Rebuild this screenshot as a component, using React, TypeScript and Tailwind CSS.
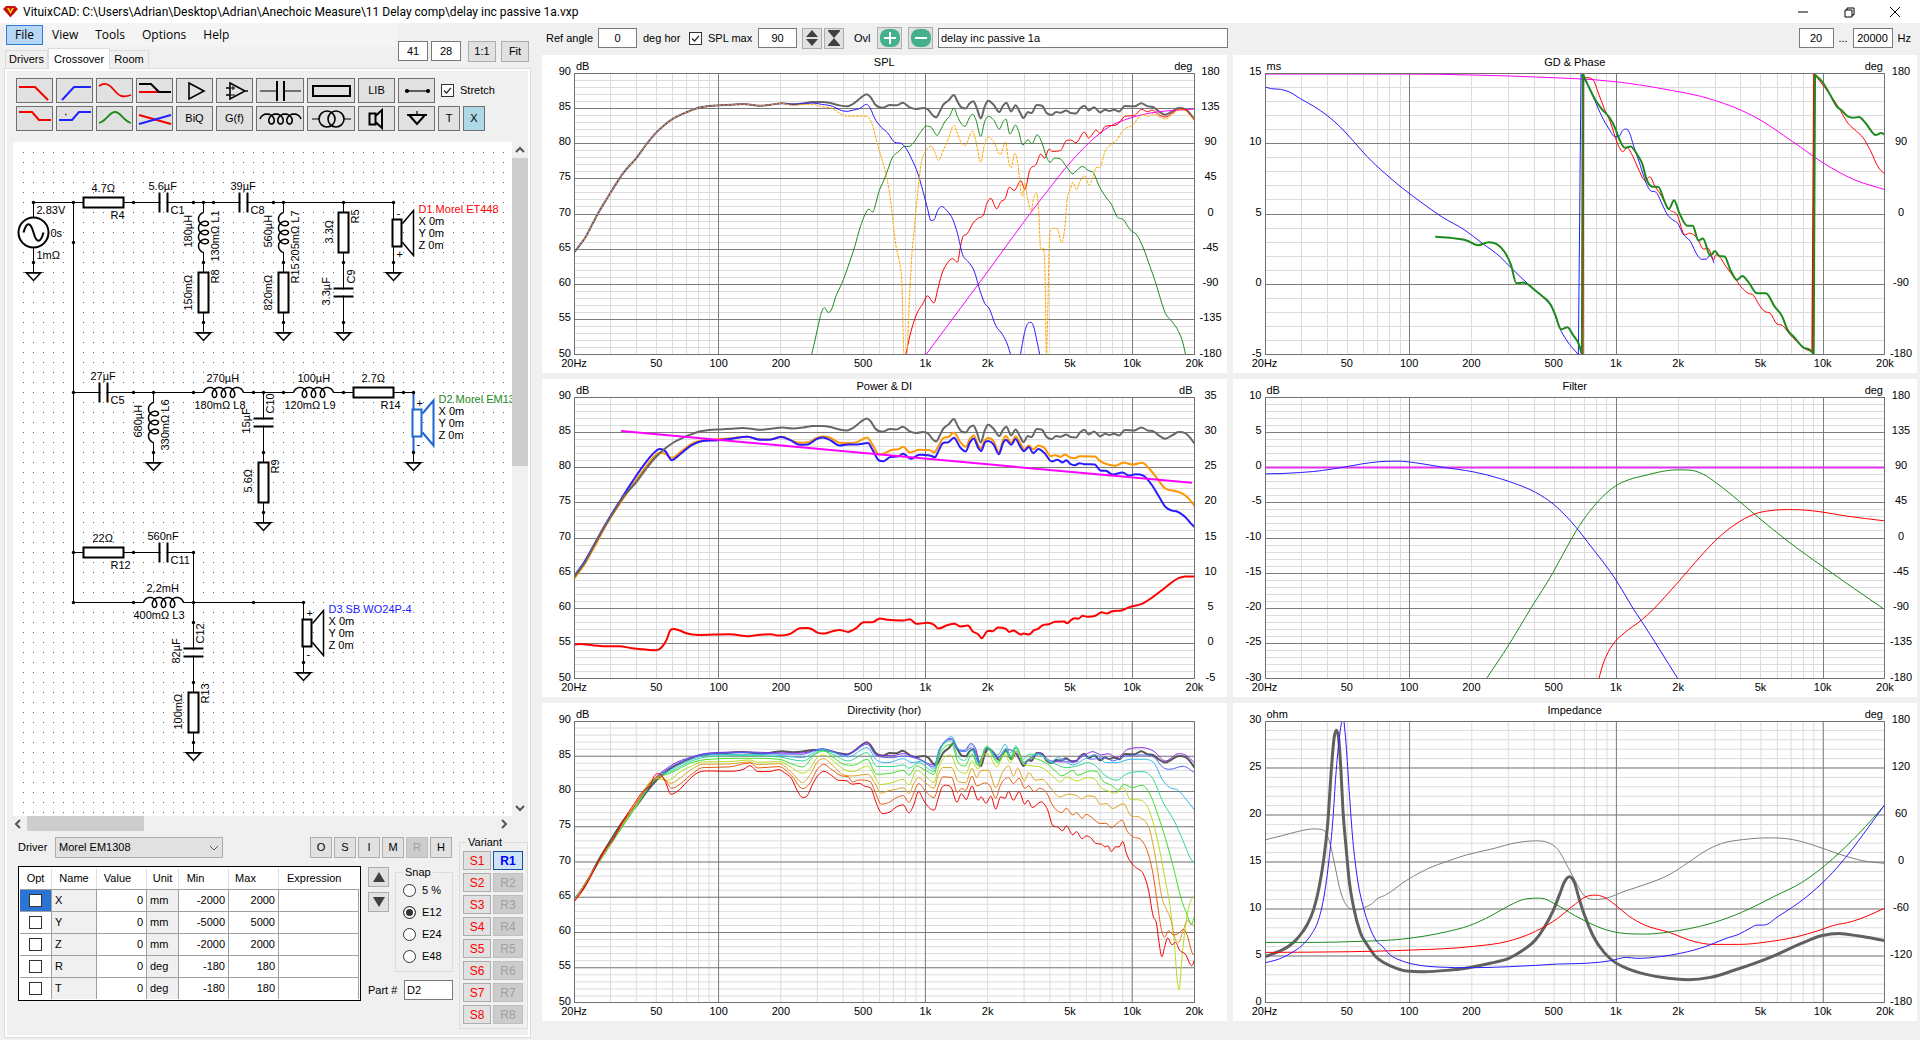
import React from "react";

/* ---------- small form parts ---------- */

function TextBox({ label, value, className = "" }: { label: string; value: string; className?: string }) {
  return (
    <input
      type="text"
      aria-label={label}
      defaultValue={value}
      className={"h-5 border border-[#7a7a7a] bg-white outline-none " + className}
    />
  );
}

function Check({ id, checked = false }: { id: string; checked?: boolean }) {
  return (
    <span className="relative block size-[13px]">
      <input
        id={id}
        type="checkbox"
        aria-label={id}
        defaultChecked={checked}
        className="peer block size-[13px] appearance-none border border-[#333] bg-white"
      />
      <svg viewBox="0 0 13 13" className="pointer-events-none absolute inset-0 hidden size-[13px] peer-checked:block">
        <path d="M3 6.5 L5.5 9 L10 3.8" fill="none" stroke="#222" strokeWidth="1.2" />
      </svg>
    </span>
  );
}

/* ---------- tool bar ---------- */

const NARROW = "0 0 35 23";
const WIDE = "0 0 46 23";

function coilPath(length: number) {
  const d = 9;
  const b = (length - d * 3.5) / 2;
  const steps = 112;
  let p = "";
  for (let i = 0; i <= steps; i++) {
    const a = -Math.PI / 2 + (7 * Math.PI * i) / steps;
    const x = (d * a) / (2 * Math.PI) + b * Math.sin(a) + d / 4 + b;
    const y = -5 * Math.cos(a);
    p += (i ? "L" : "M") + x.toFixed(2) + "," + y.toFixed(2);
  }
  return p;
}

function ToolButton({ label, children, size = "w-[37px]" }: { label: string; children: React.ReactNode; size?: string }) {
  return (
    <button
      type="button"
      aria-label={label}
      className={"flex h-[25px] items-center justify-center border border-[#707070] bg-[#e1e1e1] " + size}
    >
      {children}
    </button>
  );
}

function Glyph({ wide = false, children }: { wide?: boolean; children: React.ReactNode }) {
  return (
    <svg viewBox={wide ? WIDE : NARROW} className={wide ? "h-[23px] w-[46px]" : "h-[23px] w-[35px]"} fill="none" stroke="#000" strokeWidth="1.6">
      {children}
    </svg>
  );
}

function Toolbar() {
  return (
    <div className="flex flex-col gap-[3px] pl-[9px] pt-[7px]">
      <div className="flex items-center gap-[3px]">
        <ToolButton label="Low pass"><Glyph><path d="M2 8H18L31 21" stroke="#f00000" strokeWidth="2" /></Glyph></ToolButton>
        <ToolButton label="High pass"><Glyph><path d="M5 21L17 8H34" stroke="#2222ff" strokeWidth="2" /></Glyph></ToolButton>
        <ToolButton label="All pass"><Glyph><path d="M2 7C8 3 12 5 17 11S25 19 34 16" stroke="#f00000" strokeWidth="1.8" /></Glyph></ToolButton>
        <ToolButton label="Notch"><Glyph><path d="M2 13H21" stroke="#f00000" strokeWidth="2" /><path d="M2 5H14L22 13H34" strokeWidth="2" /></Glyph></ToolButton>
        <ToolButton label="Buffer"><Glyph><path d="M12 4L27 12L12 20Z" /></Glyph></ToolButton>
        <ToolButton label="Operational amplifier"><Glyph><path d="M13 4L28 12L13 20ZM9 9H13M9 16H13M28 12H31" /><path d="M14 9H18M16 7V11M14 16H18" strokeWidth="1" /></Glyph></ToolButton>
        <ToolButton label="Capacitor" size="w-12"><Glyph wide><path d="M3 12H19M28 12H44" strokeWidth="1.2" /><path d="M20 2V22M27 2V22" strokeWidth="2" /></Glyph></ToolButton>
        <ToolButton label="Resistor" size="w-12"><Glyph wide><rect x="5" y="7" width="37" height="10" strokeWidth="2" /></Glyph></ToolButton>
        <ToolButton label="Library">LIB</ToolButton>
        <ToolButton label="Wire"><Glyph><path d="M8 12H29" strokeWidth="1.2" /><circle cx="8" cy="12" r="1.3" fill="#000" /><circle cx="29" cy="12" r="1.3" fill="#000" /></Glyph></ToolButton>
        <span className="ml-[3px]"><Check id="stretch" checked /></span>
        <label htmlFor="stretch" className="ml-[3px]">Stretch</label>
      </div>
      <div className="flex items-center gap-[3px]">
        <ToolButton label="Low shelf"><Glyph><path d="M2 5H15L22 13H34" stroke="#f00000" strokeWidth="2" /></Glyph></ToolButton>
        <ToolButton label="High shelf"><Glyph><path d="M2 13H15L22 5H34" stroke="#2222ff" strokeWidth="2" /><path d="M8 7.5H9.5" stroke="#333" strokeWidth="1.5" /></Glyph></ToolButton>
        <ToolButton label="Peak"><Glyph><path d="M2 16C10 14 12 5 18 5S26 14 34 16" stroke="#1d8a1d" strokeWidth="1.8" /></Glyph></ToolButton>
        <ToolButton label="Crossing"><Glyph><path d="M2 8L34 17" stroke="#f00000" strokeWidth="2" /><path d="M2 17L34 8" stroke="#2222ff" strokeWidth="2" /></Glyph></ToolButton>
        <ToolButton label="Biquad">BiQ</ToolButton>
        <ToolButton label="Transfer function">G(f)</ToolButton>
        <ToolButton label="Inductor" size="w-12"><Glyph wide><path d={coilPath(41)} transform="translate(3 12)" /></Glyph></ToolButton>
        <ToolButton label="Transformer" size="w-12"><Glyph wide><circle cx="19" cy="12" r="8" /><circle cx="28" cy="12" r="8" /><path d="M4 12H11M36 12H43" strokeWidth="1.2" /></Glyph></ToolButton>
        <ToolButton label="Driver"><Glyph><path d="M10.5 6.5H16.5V17.5H10.5ZM16.5 9L23 3V21L16.5 15" strokeWidth="2" /></Glyph></ToolButton>
        <ToolButton label="Ground"><Glyph><path d="M18 4V8" strokeWidth="1.2" /><path d="M8 8H28" /><path d="M10 8H26L18 17Z" strokeWidth="2" /></Glyph></ToolButton>
        <ToolButton label="Text" size="w-[22px]">T</ToolButton>
        <button type="button" aria-label="Delete" className="h-[25px] w-[22px] border border-[#707070] bg-[#add8e6]">X</button>
      </div>
    </div>
  );
}

/* ---------- schematic ---------- */

const Res = ({ x, y, v = false }: { x: number; y: number; v?: boolean }) =>
  v ? <rect x={x - 5} y={y} width="10" height="40" fill="#fff" strokeWidth="2" /> : <rect x={x} y={y - 5} width="40" height="10" fill="#fff" strokeWidth="2" />;

const Cap = ({ x, y, v = false }: { x: number; y: number; v?: boolean }) => (
  <g transform={v ? `matrix(0 1 1 0 ${x} ${y})` : `translate(${x} ${y})`}>
    <path d="M-3 0H3" stroke="#fff" strokeWidth="3" />
    <path d="M-4 -10V10M4 -10V10" strokeWidth="2" />
  </g>
);

const Coil = ({ x, y, v = false }: { x: number; y: number; v?: boolean }) => (
  <g transform={v ? `matrix(0 1 1 0 ${x} ${y})` : `translate(${x} ${y})`}>
    <path d="M0.5 0H39.5" stroke="#fff" strokeWidth="3" />
    <path d={coilPath(40)} strokeWidth="1.5" />
  </g>
);

const Ground = ({ x, y }: { x: number; y: number }) => (
  <g transform={`translate(${x} ${y})`}>
    <path d="M0 0V10" />
    <path d="M-9 10H9" />
    <path d="M-7 10.5H7L0 18Z" fill="#fff" strokeWidth="1.5" />
    <circle r="1.7" fill="#000" stroke="none" />
  </g>
);

function Speaker({ x, y, color, title, titleColor, flip = false }: { x: number; y: number; color: string; title: string; titleColor: string; flip?: boolean }) {
  const w = color === "#000" ? 1.5 : 2;
  return (
    <g transform={`translate(${x} ${y})`}>
      <path d="M0 0V17M0 44V60" stroke={color} strokeWidth={color === "#000" ? 1 : 2} />
      <rect x="-1" y="17" width="9" height="27" fill="#fff" stroke={color} strokeWidth="2" />
      <path d="M9 21L20 8V53L9 40" stroke={color} strokeWidth={w} />
      <g fill="#000" stroke="none">
        <text x="3" y="14">{flip ? "-" : "+"}</text>
        <text x="3" y="55">{flip ? "+" : "-"}</text>
        <text x="25" y="10" fill={titleColor}>{title}</text>
        <text x="25" y="22">X 0m</text>
        <text x="25" y="34">Y 0m</text>
        <text x="25" y="46">Z 0m</text>
      </g>
      <Ground x={0} y={60} />
      <circle r="1.7" fill="#000" stroke="none" />
    </g>
  );
}

const NODES: [number, number][] = [
  [20, 60], [60, 60], [120, 60], [180, 60], [190, 60], [200, 60], [260, 60], [270, 60], [330, 60], [60, 100],
  [190, 120], [270, 120], [330, 120],
  [60, 250], [120, 250], [140, 250], [180, 250], [240, 250], [250, 250], [270, 250], [330, 250], [390, 250], [250, 310],
  [60, 410], [120, 410], [180, 410], [60, 460], [120, 460], [180, 460], [240, 460], [180, 480], [180, 540],
];

// x, y of the left end of the base line
const FLAT: [number, number, string][] = [
  [78, 49, "4.7Ω"], [97, 76, "R4"], [135, 47, "5.6µF"], [157, 71, "C1"], [217, 47, "39µF"], [237, 71, "C8"],
  [23, 71, "2.83V"], [37, 94, "0s"], [23, 116, "1mΩ"],
  [77, 237, "27µF"], [97, 261, "C5"], [193, 239, "270µH"], [181, 266, "180mΩ L8"], [284, 239, "100µH"], [271, 266, "120mΩ L9"],
  [348, 239, "2.7Ω"], [367, 266, "R14"],
  [79, 399, "22Ω"], [97, 426, "R12"], [134, 397, "560nF"], [157, 421, "C11"], [133, 449, "2.2mH"], [120, 476, "400mΩ L3"],
];

// x of the base line, y of the lower end
const UPRIGHT: [number, number, string][] = [
  [178, 105, "180µH"], [205, 119, "130mΩ L1"], [178, 168, "150mΩ"], [205, 141, "R8"],
  [258, 105, "560µH"], [285, 119, "205mΩ L7"], [258, 168, "820mΩ"], [285, 141, "R15"],
  [319, 101, "3.3Ω"], [345, 81, "R5"], [341, 141, "C9"], [316, 163, "3.3µF"],
  [128, 295, "680µH"], [155, 308, "330mΩ L6"], [260, 271, "C10"], [236, 291, "15µF"], [265, 331, "R9"], [238, 350, "5.6Ω"],
  [190, 501, "C12"], [166, 521, "82µF"], [195, 561, "R13"], [168, 587, "100mΩ"],
];

function Schematic() {
  return (
    <svg className="min-h-[640px] min-w-0 flex-1 bg-white text-[11px]" role="img" aria-label="Crossover schematic">
      <defs>
        <pattern id="dots" width="10" height="10" patternUnits="userSpaceOnUse">
          <rect width="1" height="1" fill="#666" />
        </pattern>
      </defs>
      <rect x="10" y="10" width="485" height="661" fill="url(#dots)" />
      <g transform="translate(0.5 0.5)" fill="none" stroke="#000" strokeWidth="1">
        <path d="M20 60H380M20 60V120M60 60V460M190 60V180M270 60V180M330 60V180" />
        <path d="M60 250H400M140 250V310M250 250V370" />
        <path d="M60 410H180V600M60 460H290" />
        <circle cx="20" cy="90" r="15" fill="#fff" strokeWidth="2" />
        <path d="M10 90C13 79 17 79 20 90S27 101 30 90" strokeWidth="2" />
        <Res x={70} y={60} /><Cap x={150} y={60} /><Cap x={230} y={60} />
        <Coil x={190} y={70} v /><Res x={190} y={130} v />
        <Coil x={270} y={70} v /><Res x={270} y={130} v />
        <Res x={330} y={70} v /><Cap x={330} y={150} v />
        <Cap x={90} y={250} /><Coil x={190} y={250} /><Coil x={280} y={250} /><Res x={340} y={250} />
        <Coil x={140} y={260} v /><Cap x={250} y={280} v /><Res x={250} y={320} v />
        <Res x={70} y={410} /><Cap x={150} y={410} /><Coil x={130} y={460} />
        <Cap x={180} y={510} v /><Res x={180} y={550} v />
        <Ground x={20} y={120} /><Ground x={190} y={180} /><Ground x={270} y={180} /><Ground x={330} y={180} />
        <Ground x={140} y={310} /><Ground x={250} y={370} /><Ground x={180} y={600} />
        <Speaker x={380} y={60} color="#000" title="D1 Morel ET448" titleColor="#ff0000" flip />
        <Speaker x={400} y={250} color="#1f66d0" title="D2 Morel EM1308" titleColor="#1d8a1d" />
        <Speaker x={290} y={460} color="#000" title="D3 SB WO24P-4" titleColor="#1a1aff" />
        <g fill="#000" stroke="none">
          {NODES.map(([x, y]) => <circle key={x + "," + y} cx={x} cy={y} r="1.7" />)}
          {FLAT.map(([x, y, t]) => <text key={t} x={x} y={y}>{t}</text>)}
          {UPRIGHT.map(([x, y, t]) => <text key={t} transform={`translate(${x} ${y}) rotate(-90)`}>{t}</text>)}
        </g>
      </g>
    </svg>
  );
}

const ARROWS = { up: "M4 10L8 6L12 10", down: "M4 6L8 10L12 6", left: "M10 4L6 8L10 12", right: "M6 4L10 8L6 12" };

function ScrollArrow({ dir }: { dir: "up" | "down" | "left" | "right" }) {
  return (
    <button type="button" aria-label={"Scroll " + dir} className="size-4 shrink-0">
      <svg viewBox="0 0 16 16" className="size-4"><path d={ARROWS[dir]} fill="none" stroke="#555" strokeWidth="2" /></svg>
    </button>
  );
}

/* ---------- parameter area ---------- */

const ROWS = [
  ["X", "0", "mm", "-2000", "2000"],
  ["Y", "0", "mm", "-5000", "5000"],
  ["Z", "0", "mm", "-2000", "2000"],
  ["R", "0", "deg", "-180", "180"],
  ["T", "0", "deg", "-180", "180"],
];

function ParameterTable() {
  const th = "border-r border-[#e0e0e0] font-normal";
  const td = "border-r border-t border-[#a0a0a0] px-[3px]";
  return (
    <div className="w-[343px] border border-black bg-white p-px">
      <table className="w-full table-fixed border-separate border-spacing-0">
        <colgroup>
          <col className="w-8" /><col className="w-[45px]" /><col className="w-[50px]" /><col className="w-8" />
          <col className="w-[50px]" /><col className="w-[50px]" /><col />
        </colgroup>
        <thead>
          <tr className="h-[21px]">
            <th className={th}>Opt</th>
            <th className={th}>Name</th>
            <th className={th + " pr-2"}>Value</th>
            <th className={th}>Unit</th>
            <th className={th + " pr-4"}>Min</th>
            <th className={th + " pr-4"}>Max</th>
            <th className="pl-2 text-left font-normal">Expression</th>
          </tr>
        </thead>
        <tbody>
          {ROWS.map(([name, value, unit, min, max], i) => (
            <tr key={name} className="h-[22px]">
              <td className={td + (i === 0 ? " bg-[#2a74d6]" : "")}><span className="flex justify-center"><Check id={"Optimize " + name} /></span></td>
              <td className={td + " bg-[#f0f0f0]"}>{name}</td>
              <td className={td + " text-right"}>{value}</td>
              <td className={td + " bg-[#f0f0f0]"}>{unit}</td>
              <td className={td + " text-right"}>{min}</td>
              <td className={td + " text-right"}>{max}</td>
              <td className={td}></td>
            </tr>
          ))}
        </tbody>
      </table>
    </div>
  );
}

function Parameters() {
  return (
    <div className="flex gap-[6px] pb-[6px] pl-[11px] pt-1">
      <div className="w-[435px] pt-px">
        <div className="flex items-center">
          <label htmlFor="driver" className="w-[37px]">Driver</label>
          <span className="relative block">
            <select id="driver" className="h-[21px] w-[168px] appearance-none border border-[#adadad] bg-[#e1e1e1] pl-[3px]">
              <option>Morel EM1308</option>
            </select>
            <svg viewBox="0 0 10 6" className="pointer-events-none absolute right-1 top-2 h-[6px] w-[10px]">
              <path d="M1 1L5 5L9 1" fill="none" stroke="#555" />
            </svg>
          </span>
          <div className="ml-auto flex gap-[2px] pr-px">
            {["O", "S", "I", "M", "R", "H"].map((k) => (
              <button key={k} type="button" disabled={k === "R"} className="h-[21px] w-[22px] border border-[#adadad] bg-[#e1e1e1] disabled:border-[#bfbfbf] disabled:bg-[#ccc] disabled:text-[#a0a0a0]">{k}</button>
            ))}
          </div>
        </div>
        <div className="mt-2 flex items-start gap-[7px]">
          <ParameterTable />
          <div className="flex-1">
            <div className="flex gap-[6px]">
              <div className="flex flex-col gap-[5px] pt-px">
                {[["Move up", "M1 11L7 1L13 11Z"], ["Move down", "M1 1L7 11L13 1Z"]].map(([name, d]) => (
                  <button key={name} type="button" aria-label={name} className="flex h-5 w-[21px] items-center justify-center border border-[#adadad] bg-[#e1e1e1]">
                    <svg viewBox="0 0 14 12" className="h-3 w-[14px]"><path d={d} fill="#404040" /></svg>
                  </button>
                ))}
              </div>
              <fieldset className="h-[106px] flex-1 border border-[#dcdcdc] pl-[7px]">
                <legend className="px-[2px] leading-[13px]">Snap</legend>
                {["5 %", "E12", "E24", "E48"].map((s) => (
                  <label key={s} className="flex h-[22px] items-center gap-[6px] whitespace-nowrap">
                    <input type="radio" name="snap" defaultChecked={s === "E12"} className="size-[13px] shrink-0 appearance-none rounded-full border border-[#333] bg-white checked:border-[#333] checked:bg-[#333] checked:shadow-[inset_0_0_0_2px_#fff]" />
                    {s}
                  </label>
                ))}
              </fieldset>
            </div>
            <div className="mt-2 flex items-center justify-between">
              <label htmlFor="part">Part #</label>
              <input id="part" type="text" defaultValue="D2" className="h-5 w-[49px] border border-[#7a7a7a] bg-white pl-[2px]" />
            </div>
          </div>
        </div>
      </div>
      <fieldset className="w-[69px] border border-[#dcdcdc] px-[3px] pb-1 pt-[2px]">
        <legend className="ml-[3px] px-[2px] leading-[13px]">Variant</legend>
        <div className="grid grid-cols-[28px_30px] gap-x-[2px] gap-y-[3px]">
          {[1, 2, 3, 4, 5, 6, 7, 8].map((n) => (
            <React.Fragment key={n}>
              <button type="button" className="h-[19px] border border-[#adadad] bg-[#e1e1e1] text-[12px] leading-none text-[#ff0000]">S{n}</button>
              {n === 1 ? (
                <button type="button" className="h-[19px] border border-[#1d4f99] bg-[#cce4f7] text-[12px] font-bold leading-none text-[#0000ff]">R1</button>
              ) : (
                <button type="button" disabled className="h-[19px] border border-[#bfbfbf] bg-[#ccc] text-[12px] leading-none text-[#a0a0a0]">R{n}</button>
              )}
            </React.Fragment>
          ))}
        </div>
      </fieldset>
    </div>
  );
}

function LeftPane() {
  const btn = "h-[21px] w-7 border border-[#adadad] bg-[#e1e1e1]";
  return (
    <section className="flex w-[542px] shrink-0 flex-col pb-[2px] pl-1 pr-[11px]">
      <div className="flex h-[45px]">
        <div className="flex flex-1 flex-col justify-between">
          <nav className="flex h-6 items-center bg-[#f4f4f4] pl-[2px] font-['Open_Sans','Noto_Sans',sans-serif] text-[12px]">
            <button type="button" className="h-5 w-[37px] border border-[#2a7bd4] bg-[#b8d7f4] leading-none">File</button>
            <button type="button" className="ml-[9px] leading-none">View</button>
            <button type="button" className="ml-[17px] leading-none">Tools</button>
            <button type="button" className="ml-[17px] leading-none">Options</button>
            <button type="button" className="ml-[17px] leading-none">Help</button>
          </nav>
          <div role="tablist" className="flex items-end pl-px">
            <button type="button" role="tab" className="h-[18px] w-[43px] border border-b-0 border-[#dcdcdc]">Drivers</button>
            <button type="button" role="tab" aria-selected="true" className="relative z-10 -mb-px h-[21px] w-[62px] border border-b-0 border-[#dcdcdc] bg-white">Crossover</button>
            <button type="button" role="tab" className="h-[18px] w-[39px] border border-b-0 border-l-0 border-[#dcdcdc]">Room</button>
          </div>
        </div>
        <div className="flex items-end pb-[6px]">
          <TextBox label="Grid width" value="41" className="mb-px w-[30px] text-center" />
          <TextBox label="Grid height" value="28" className="mb-px ml-[3px] w-[30px] text-center" />
          <button type="button" className={btn + " ml-[7px]"}>1:1</button>
          <button type="button" className={btn + " ml-[5px] mr-[2px]"}>Fit</button>
        </div>
      </div>
      <div className="flex flex-1 flex-col border border-[#dcdcdc] bg-white p-[2px]">
        <div className="flex flex-1 flex-col bg-[#f0f0f0]">
          <Toolbar />
          <div className="mt-[11px] flex flex-1 pl-[6px]">
            <Schematic />
            <div className="flex w-4 flex-col">
              <ScrollArrow dir="up" />
              <div className="flex flex-1 flex-col"><div className="h-[48%] bg-[#cdcdcd]" /></div>
              <ScrollArrow dir="down" />
            </div>
          </div>
          <div className="flex h-4 pl-[3px] pr-4">
            <ScrollArrow dir="left" />
            <div className="ml-px flex-1"><div className="h-[15px] w-1/4 bg-[#cdcdcd]" /></div>
            <ScrollArrow dir="right" />
          </div>
          <Parameters />
        </div>
      </div>
    </section>
  );
}

/* ---------- charts ---------- */

type Curve = { pts: string; color: string; width?: number; dash?: string; straight?: boolean; dy?: number };
type ChartSpec = {
  title: string;
  unit: string;
  rightUnit?: string;
  left: string[];
  right?: string[];
  box: [number, number, number, number];
  minor: number;
  curves: Curve[];
};

// Slope at m of a smooth curve through q, m, r that does not overshoot.
function slopeAt(q: number[], m: number[], r: number[]) {
  const h1 = m[0] - q[0];
  const h2 = r[0] - m[0];
  const s1 = (m[1] - q[1]) / (h1 || 1);
  const s2 = (r[1] - m[1]) / (h2 || 1);
  if (q === m) return s2;
  if (r === m) return s1;
  if (s1 * s2 <= 0) return 0;
  const s = (s1 * h2 + s2 * h1) / (h1 + h2);
  const cap = 3 * Math.min(Math.abs(s1), Math.abs(s2));
  return Math.sign(s) * Math.min(Math.abs(s), cap);
}

function pathOf(pts: string, straight?: boolean) {
  const p = pts.split(" ").map((s) => s.split(",").map(Number));
  let d = `M${p[0][0]},${p[0][1]}`;
  for (let i = 0; i < p.length - 1; i++) {
    const b = p[i];
    const c = p[i + 1];
    if (straight) {
      d += `L${c[0]},${c[1]}`;
      continue;
    }
    const a = p[i - 1] || b;
    const e = p[i + 2] || c;
    const k = (c[0] - b[0]) / 3;
    d += `C${b[0] + k},${(b[1] + k * slopeAt(a, b, c)).toFixed(1)} ${c[0] - k},${(c[1] - k * slopeAt(b, c, e)).toFixed(1)} ${c[0]},${c[1]}`;
  }
  return d;
}

const FREQS: number[] = [];
for (const base of [10, 100, 1000, 10000]) {
  for (let m = 1; m < 10; m++) if (base * m > 20 && base * m < 20000) FREQS.push(base * m);
}
const FREQ_LABELS = ["20Hz", "50", "100", "200", "500", "1k", "2k", "5k", "10k", "20k"];

function Chart({ title, unit, rightUnit, left, right = [], box, minor, curves }: ChartSpec) {
  const [x0, y0, w, h] = box;
  const fx = (f: number) => x0 + (Math.log10(f / 20) / 3) * w;
  const majors = left.length - 1;
  return (
    <figure className="grid min-h-[240px] grid-cols-[32px_1fr_32px] grid-rows-[18px_1fr_18px] bg-white">
      <figcaption className="col-start-2 grid grid-cols-3 items-end leading-[15px]">
        <span className="pl-[2px] leading-[13px]">{unit}</span>
        <span className="self-start text-center">{title}</span>
        <span className="pr-[2px] text-right leading-[13px]">{rightUnit}</span>
      </figcaption>
      <div className="col-start-1 row-start-2 -mt-[2px] mb-[2px] flex flex-col items-end justify-between pr-[3px]">
        {left.map((t) => <span key={t} className="flex h-0 items-center">{t}</span>)}
      </div>
      <div className="relative col-start-2 row-start-2">
        <svg viewBox={box.join(" ")} preserveAspectRatio="none" className="absolute inset-0 size-full" role="img" aria-label={title + " chart"}>
          <g fill="none" stroke="#dcdcdc" shapeRendering="crispEdges">
            {FREQS.map((f) => <line key={f} x1={fx(f)} x2={fx(f)} y1={y0} y2={y0 + h} vectorEffect="non-scaling-stroke" />)}
            {Array.from({ length: minor - 1 }, (_, i) => y0 + (h * (i + 1)) / minor).map((y) => (
              <line key={y} x1={x0} x2={x0 + w} y1={y} y2={y} vectorEffect="non-scaling-stroke" />
            ))}
          </g>
          <g fill="none" stroke="#7d7d7d" shapeRendering="crispEdges">
            {[100, 1000, 10000].map((f) => <line key={f} x1={fx(f)} x2={fx(f)} y1={y0} y2={y0 + h} vectorEffect="non-scaling-stroke" />)}
            {Array.from({ length: majors - 1 }, (_, i) => y0 + (h * (i + 1)) / majors).map((y) => (
              <line key={y} x1={x0} x2={x0 + w} y1={y} y2={y} vectorEffect="non-scaling-stroke" />
            ))}
          </g>
          {curves.map((c, i) => (
            <path
              key={i}
              d={pathOf(c.pts, c.straight)}
              transform={c.dy ? `translate(0 ${c.dy})` : undefined}
              fill="none"
              stroke={c.color}
              strokeWidth={c.width || 1}
              strokeDasharray={c.dash}
              strokeLinejoin="round"
              vectorEffect="non-scaling-stroke"
            />
          ))}
        </svg>
        <div className="pointer-events-none absolute inset-0 border border-[#707070]" />
      </div>
      <div className="col-start-3 row-start-2 -mt-[2px] mb-[2px] flex flex-col items-center justify-between">
        {right.map((t) => <span key={t} className="flex h-0 items-center">{t}</span>)}
      </div>
      <div className="col-start-2 row-start-3 grid grid-cols-[398fr_301fr_301fr_398fr_301fr_301fr_398fr_301fr_301fr_0px] leading-[17px]">
        {FREQ_LABELS.map((t) => <span key={t} className="flex w-0 justify-center">{t}</span>)}
      </div>
    </figure>
  );
}

const GRAY = "#666666";
const BLUE = "#2a1aff";
const GREEN = "#1d8a1d";
const RED = "#ff0000";
const MAGENTA = "#ff00ff";

const LOW =
  "78,758 90,738 104,712 120,672 135,635 150,602 165,570 190,519 220,474 245,429 265,398 284,375 303,357 322,344 340,334 360,324 385,319 410,317 435,315 460,313 480,315 500,318 525,315 550,311 ";
const TOTAL = LOW +
  "575,314 600,311 620,307 640,307 660,310 680,317 697,320 715,309 728,295 742,284 750,291 762,315 778,324 795,316 810,317 824,309 840,323 855,328 870,325 882,330 893,348 900,353 908,335 915,317 928,302 940,286 948,305 957,323 967,326 975,312 984,305 992,325 1001,356 1010,320 1018,303 1030,315 1043,337 1052,317 1059,309 1070,335 1080,317 1090,338 1098,355 1108,337 1116,340 1128,316 1140,318 1150,339 1162,346 1172,337 1182,339 1195,332 1205,340 1217,341 1227,325 1236,318 1246,332 1258,323 1272,338 1283,330 1293,334 1303,330 1315,335 1328,319 1350,320 1365,311 1380,320 1392,322 1405,335 1420,345 1435,335 1450,325 1465,328 1475,340 1486,360";

const DB90 = ["90", "85", "80", "75", "70", "65", "60", "55", "50"];
const DEG45 = ["180", "135", "90", "45", "0", "-45", "-90", "-135", "-180"];

const CHARTS: ChartSpec[] = [
  {
    title: "SPL", unit: "dB", rightUnit: "deg", left: DB90, right: DEG45, box: [78, 220, 1408, 845], minor: 40,
    curves: [
      { pts: TOTAL, color: GRAY, width: 2 },
      { pts: "876,1065 1000,845 1150,577 1205,487 1250,425 1290,383 1340,355 1400,337 1440,332 1486,328", color: MAGENTA },
      { pts: "831,1065 838,1020 848,970 858,935 868,915 880,888 895,909 903,870 912,825 925,790 937,776 948,787 955,740 960,712 970,702 985,667 995,655 1007,646 1015,610 1024,596 1037,627 1047,605 1056,597 1066,562 1077,572 1092,543 1101,569 1112,512 1127,493 1137,463 1146,475 1156,448 1164,455 1182,452 1196,422 1205,421 1217,429 1236,397 1246,415 1263,391 1272,401 1283,380 1310,375 1328,350 1350,347 1366,329 1380,336 1390,331 1402,342 1420,352 1435,340 1455,328 1468,333 1475,345 1486,360", color: RED },
      { pts: "617,1065 625,1020 635,960 640,935 646,923 655,938 662,930 672,890 686,850 700,800 715,740 728,680 738,645 747,628 756,637 762,615 770,575 780,545 790,510 800,475 815,455 828,440 838,440 848,430 862,402 878,379 888,382 902,407 910,390 920,365 930,350 940,325 948,350 956,370 965,380 975,355 982,343 990,360 1001,410 1010,365 1018,350 1030,360 1043,388 1052,365 1058,358 1067,403 1080,376 1087,395 1096,436 1108,420 1117,432 1129,405 1140,430 1150,470 1158,488 1168,475 1182,478 1195,500 1210,522 1220,510 1232,500 1245,512 1257,520 1270,560 1285,592 1298,615 1310,650 1325,660 1340,690 1355,705 1370,745 1385,800 1397,845 1405,880 1420,940 1435,965 1450,995 1460,1030 1466,1065", color: GREEN },
      { pts: LOW + "575,314 600,311 620,310 640,314 665,320 680,330 697,335 712,331 725,327 742,314 750,325 760,355 775,382 790,400 805,427 822,432 832,447 845,480 858,520 870,575 880,625 888,662 895,660 903,633 912,620 924,632 938,660 948,700 960,765 972,785 985,810 1000,875 1010,910 1020,925 1035,977 1050,1003 1062,1035 1069,1065", color: BLUE },
      { pts: "1091,1065 1100,1000 1108,970 1115,967 1121,980 1128,1020 1135,1065", color: BLUE },
      { pts: LOW + "575,317 600,314 620,314 640,321 665,327 680,340 697,349 720,349 742,350 752,365 765,425 778,485 788,535 798,620 803,680 810,750 817,790 822,850 827,1065 833,1065 838,930 845,760 850,690 858,580 866,490 876,455 888,439 896,455 905,482 915,455 928,415 940,377 948,400 957,430 967,437 975,410 983,394 990,425 1001,488 1010,430 1018,412 1030,425 1045,465 1057,427 1065,490 1070,505 1078,460 1085,490 1092,575 1096,590 1101,550 1107,595 1116,633 1120,600 1127,580 1132,620 1137,750 1143,745 1147,830 1150,1065 1153,940 1156,750 1160,690 1170,685 1176,690 1184,728 1192,680 1197,600 1204,570 1210,547 1218,570 1226,545 1236,528 1247,555 1256,530 1263,503 1271,503 1283,455 1296,435 1310,420 1325,390 1340,380 1350,370 1358,355 1370,345 1382,350 1392,343 1405,350 1420,358 1435,345 1450,330 1465,332 1475,345 1486,360", color: "#ffa500", dash: "3 1" },
    ],
  },
  {
    title: "GD & Phase", unit: "ms", rightUnit: "deg", left: ["15", "10", "5", "0", "-5"], right: ["180", "90", "0", "-90", "-180"], box: [90, 220, 1400, 845], minor: 20,
    curves: [
      { pts: "90,223 400,223 560,226 700,232 880,246 990,268 1100,300 1200,355 1280,425 1350,490 1420,540 1490,570", color: MAGENTA },
      { pts: "797,1065 803,225", color: BLUE, straight: true },
      { pts: "90,262 105,267 125,269 145,277 170,297 200,320 230,347 260,382 290,425 320,470 360,520 400,565 440,605 490,652 540,690 580,730 620,770 650,810 690,860 720,895 740,930 755,985 770,1020 797,1064", color: BLUE },
      { pts: "803,225 820,260 835,305 850,350 865,385 880,411 888,411 897,392 905,388 912,398 922,440 935,490 950,550 960,573 972,577 985,610 998,645 1010,660 1022,672 1032,700 1050,725 1065,765 1075,778 1085,778 1095,765 1103,790", color: BLUE },
      { pts: "808,1065 809,235", color: RED, straight: true },
      { pts: "809,235 815,234 830,240 842,280 855,325 870,370 885,430 897,456 907,444 920,470 935,515 947,542 958,531 970,560 985,590 995,615 1003,630 1020,645 1037,705 1048,700 1065,715 1080,748 1090,745 1102,780 1107,765 1115,770 1130,800 1150,835 1165,862 1180,880 1192,886 1205,915 1218,935 1230,940 1245,972 1257,976 1272,1000 1290,1025 1310,1048 1325,1055", color: RED },
      { pts: "1325,1055 1329,222", color: RED, straight: true, width: 2 },
      { pts: "1329,222 1345,250 1365,285 1385,325 1405,370 1425,395 1440,415 1455,450 1475,505 1490,524", color: RED },
      { pts: "474,711 520,716 545,722 570,736 595,727 612,732 630,755 645,795 657,850 672,848 685,855 700,872 715,888 735,915 745,945 758,988 772,982 785,1005 800,1040 805,1065", color: GREEN, width: 2 },
      { pts: "805,1065 807,222", color: GREEN, width: 2, straight: true },
      { pts: "807,222 820,260 835,300 850,328 868,355 880,385 890,420 902,444 915,440 930,465 942,495 950,535 962,560 978,562 990,600 1001,628 1013,601 1025,640 1043,678 1055,678 1068,722 1078,716 1095,768 1105,753 1115,768 1127,770 1140,810 1155,840 1167,828 1180,845 1200,880 1220,880 1240,920 1257,950 1268,987 1285,1013 1305,1043 1318,1048 1328,1062", color: GREEN, width: 2 },
      { pts: "1328,1062 1331,225", color: GREEN, width: 2, straight: true },
      { pts: "1331,225 1348,247 1365,285 1380,320 1392,333 1405,350 1418,354 1430,352 1445,370 1468,406 1480,400 1490,406", color: GREEN, width: 2 },
    ],
  },
  {
    title: "Power & DI", unit: "dB", rightUnit: "dB", left: DB90, right: ["35", "30", "25", "20", "15", "10", "5", "0", "-5"], box: [78, 68, 1408, 844], minor: 40,
    curves: [
      { pts: "78,612 100,572 125,515 150,453 180,391 210,333 240,279 262,243 272,235 285,238 300,250 320,232 345,208 370,198 400,195 430,192 470,187 500,195 520,195 550,187 570,197 590,205 610,203 630,190 643,186 660,190 680,205 700,206 720,203 743,189 755,210 770,240 785,235 800,226 815,224 825,217 840,234 862,226 885,227 895,234 905,215 915,192 928,187 940,174 955,204 967,217 976,195 985,183 995,212 1001,222 1010,198 1018,191 1030,200 1042,233 1052,195 1058,185 1070,205 1080,186 1090,205 1100,225 1110,213 1120,225 1132,213 1145,220 1160,245 1170,242 1182,247 1192,240 1205,250 1215,251 1225,245 1260,246 1272,260 1290,270 1307,274 1325,264 1345,270 1367,265 1385,285 1400,310 1420,342 1445,350 1460,358 1475,375 1486,394", color: "#ff9500", width: 2 },
      { pts: "78,605 100,565 125,507 150,448 180,384 210,322 240,265 262,232 272,224 285,230 300,257 320,238 345,212 370,200 400,198 430,194 472,187 500,196 520,196 548,188 570,198 590,211 608,210 630,193 643,189 660,198 680,213 700,210 720,210 745,206 755,225 770,258 780,260 795,248 815,245 825,238 842,253 862,241 885,243 897,248 905,230 915,206 928,203 940,190 955,220 967,231 976,205 985,192 995,220 1002,230 1010,205 1018,200 1030,210 1042,239 1052,205 1058,196 1070,211 1080,194 1090,215 1099,230 1110,218 1120,236 1132,224 1145,235 1162,261 1175,256 1187,264 1195,257 1205,269 1215,272 1225,266 1235,269 1260,270 1272,288 1285,289 1300,300 1323,294 1337,303 1352,299 1370,303 1390,333 1405,365 1420,397 1435,408 1445,410 1465,427 1478,447 1486,457", color: BLUE, width: 2 },
      { pts: TOTAL, color: GRAY, width: 2, dy: -152 },
      { pts: "78,809 95,807 120,811 145,814 180,814 210,820 240,824 265,826 277,817 288,795 297,765 305,762 318,767 335,776 360,780 430,778 475,784 495,780 525,778 540,782 570,776 590,760 605,759 618,763 630,773 645,776 665,769 680,765 700,771 718,760 735,742 755,742 772,731 790,735 825,737 840,733 855,747 880,744 895,750 905,761 925,751 942,747 955,755 972,752 983,770 995,778 1003,790 1017,768 1028,769 1040,758 1058,762 1066,771 1075,767 1092,779 1098,776 1110,779 1122,766 1132,761 1140,752 1155,748 1170,741 1190,740 1197,745 1207,734 1215,730 1222,732 1232,723 1245,726 1262,722 1275,712 1287,716 1298,710 1322,706 1340,696 1365,688 1390,668 1420,638 1450,610 1465,605 1486,605", color: RED, width: 2 },
      { pts: "185,170 1480,325", color: MAGENTA, width: 2, straight: true },
    ],
  },
  {
    title: "Filter", unit: "dB", rightUnit: "deg", left: ["10", "5", "0", "-5", "-10", "-15", "-20", "-25", "-30"], right: DEG45, box: [90, 68, 1400, 844], minor: 40,
    curves: [
      { pts: "90,279 1490,279", color: "#dd33ee", width: 2, straight: true },
      { pts: "843,912 852,870 865,830 880,800 900,775 940,735 965,705 1000,655 1040,595 1080,534 1115,487 1150,450 1195,418 1230,408 1280,405 1340,411 1400,424 1490,439", color: RED },
      { pts: "589,912 640,810 690,700 740,593 770,520 800,452 830,398 860,356 880,335 910,316 950,302 985,291 1020,286 1050,287 1080,300 1110,327 1160,380 1200,425 1270,500 1350,577 1420,642 1490,706", color: GREEN },
      { pts: "90,298 130,297 170,294 200,291 240,284 280,275 310,268 345,262 390,260 430,265 490,278 560,292 620,312 660,330 700,353 740,388 780,440 830,523 880,612 900,655 920,700 940,740 1022,912", color: BLUE },
    ],
  },
  {
    title: "Directivity (hor)", unit: "dB", left: DB90, box: [78, 80, 1408, 847], minor: 40,
    curves: [
      { pts: TOTAL, color: "#555555", width: 2, dy: -140 },
      { pts: "80,616 165,440 215,340 262,252 300,212 345,188 385,176 478,173 543,176 597,176 640,164 695,182 743,145 765,182 800,184 825,178 855,190 895,212 908,165 935,135 948,165 965,168 978,148 990,165 999,210 1015,160 1040,190 1058,165 1080,175 1098,205 1115,195 1133,175 1160,200 1200,203 1215,200 1240,180 1255,172 1275,182 1290,178 1310,190 1335,165 1367,160 1395,172 1420,200 1450,178 1465,182 1486,205", color: "#8a2be2" },
      { pts: "80,616 165,441 215,342 262,253 300,217 345,190 385,178 478,175 543,179 597,180 640,163 695,183 743,150 765,185 800,190 825,185 860,195 895,218 908,165 935,132 948,165 965,172 980,160 997,205 1015,160 1040,190 1058,170 1070,190 1082,170 1098,210 1115,190 1135,180 1160,205 1195,195 1210,205 1235,180 1250,195 1285,190 1300,200 1330,185 1370,182 1395,190 1415,220 1430,225 1460,216 1486,235", color: "#5560ff" },
      { pts: "80,616 165,443 215,343 262,255 300,225 345,195 385,182 478,180 543,183 597,190 640,165 700,188 743,160 765,198 790,205 825,193 845,205 870,200 895,225 905,170 918,145 935,126 948,160 965,170 981,150 997,200 1015,160 1040,182 1056,150 1068,175 1080,160 1100,205 1118,185 1133,178 1160,205 1175,190 1210,212 1235,195 1262,182 1285,205 1310,205 1340,195 1370,195 1395,208 1415,260 1435,283 1445,285 1465,312 1486,348", color: "#35b8e8" },
      { pts: "80,616 165,443 215,345 262,256 300,230 345,200 385,187 478,184 543,188 597,200 640,168 665,180 700,200 743,175 765,216 800,217 825,212 838,222 860,205 895,232 910,165 935,140 948,185 965,198 981,168 995,210 1015,155 1040,200 1058,162 1068,190 1080,155 1098,195 1110,180 1130,180 1150,195 1175,212 1195,220 1220,215 1245,205 1262,215 1280,240 1310,258 1330,240 1367,232 1390,250 1415,325 1440,380 1460,440 1478,495 1486,507", color: "#2fd98f" },
      { pts: "80,617 165,442 215,343 262,256 300,235 345,205 385,195 478,192 543,195 575,210 597,218 625,180 645,170 665,188 690,210 712,213 743,195 765,240 800,236 825,228 838,243 855,215 875,228 895,240 905,190 918,160 935,150 948,200 965,215 981,180 995,215 1013,158 1040,205 1058,172 1068,195 1082,160 1098,205 1115,190 1130,195 1155,212 1170,230 1185,245 1210,228 1220,243 1250,230 1265,232 1275,255 1300,275 1312,288 1325,270 1345,280 1367,273 1385,300 1405,370 1425,455 1440,530 1455,610 1470,665 1478,692 1486,668", color: "#3be02a" },
      { pts: "80,618 165,440 215,340 262,253 290,258 320,232 345,215 370,203 430,202 478,197 495,204 543,202 572,220 597,237 612,225 632,187 645,182 662,195 690,225 710,232 745,215 760,245 772,271 800,265 825,255 838,272 855,228 875,245 895,265 905,220 915,195 932,182 948,225 967,237 981,200 995,225 1010,178 1020,182 1037,218 1055,180 1068,205 1082,170 1098,210 1120,215 1140,220 1160,240 1182,263 1195,248 1220,260 1242,250 1260,255 1272,278 1290,290 1307,297 1325,280 1340,315 1365,318 1385,355 1405,455 1420,560 1432,650 1440,740 1447,860 1451,888 1457,800 1465,700 1475,630 1486,603", color: "#b5dc20" },
      { pts: "80,618 165,438 215,335 262,253 275,248 298,267 320,250 345,225 370,210 430,209 478,203 495,211 543,208 572,235 597,265 612,245 632,200 645,193 662,210 690,242 710,245 745,240 760,265 775,297 790,290 810,285 825,280 838,298 850,265 860,250 875,265 895,282 905,240 915,220 935,220 950,262 967,265 981,222 992,250 1000,230 1018,228 1035,280 1050,235 1064,215 1075,245 1085,222 1100,260 1110,235 1125,258 1140,255 1160,282 1180,308 1200,300 1220,305 1230,314 1242,305 1260,308 1272,330 1287,328 1300,343 1325,328 1340,362 1365,372 1385,410 1400,510 1412,610 1422,645 1432,675 1442,735 1450,745 1460,710 1470,680 1486,697", color: "#e0a020" },
      { pts: "80,620 125,522 165,437 215,335 262,252 272,244 285,258 300,282 320,268 345,240 370,220 430,218 478,206 495,221 543,217 572,245 597,283 610,272 632,222 645,210 662,225 685,245 700,247 710,263 725,257 750,262 762,295 775,330 792,325 810,310 825,304 838,325 848,300 860,268 875,290 895,310 905,275 915,248 935,250 948,295 957,283 967,288 981,246 992,275 1010,266 1022,275 1035,312 1045,275 1064,250 1075,268 1088,252 1101,282 1110,275 1122,293 1135,282 1150,295 1165,335 1185,355 1195,342 1210,362 1218,355 1231,372 1240,360 1255,372 1272,388 1285,387 1297,400 1310,388 1322,378 1332,408 1345,427 1365,437 1380,475 1392,540 1402,630 1410,700 1418,730 1427,710 1438,722 1450,718 1460,706 1470,725 1478,765 1483,782 1486,780", color: "#e85a10" },
      { pts: "80,620 100,585 125,525 150,462 165,440 190,378 215,328 235,290 250,275 262,242 272,238 285,262 298,300 312,292 335,262 355,238 380,230 430,231 462,225 478,214 495,232 520,232 543,226 555,235 572,254 585,290 597,310 607,305 620,268 632,243 645,231 662,243 678,258 695,259 710,270 725,267 738,276 752,282 762,320 778,358 795,353 810,338 825,332 838,356 848,335 860,292 872,320 895,348 905,310 912,282 920,273 933,278 947,324 957,298 968,316 981,275 995,318 1002,308 1013,327 1024,306 1035,345 1046,308 1056,312 1064,292 1075,318 1088,292 1101,330 1108,318 1118,340 1138,323 1152,345 1165,395 1175,398 1187,410 1195,395 1210,422 1218,412 1231,434 1240,425 1250,430 1262,448 1275,450 1283,458 1290,455 1297,472 1307,458 1315,458 1323,442 1332,480 1345,510 1355,522 1370,540 1382,590 1392,665 1400,690 1405,740 1412,788 1418,760 1425,732 1435,752 1443,745 1452,768 1465,780 1480,815 1486,798", color: "#f00000" },
    ],
  },
  {
    title: "Impedance", unit: "ohm", rightUnit: "deg", left: ["30", "25", "20", "15", "10", "5", "0"], right: ["180", "120", "60", "0", "-60", "-120", "-180"], box: [90, 80, 1400, 847], minor: 30,
    curves: [
      { pts: "90,437 130,424 170,410 200,404 218,406 228,416 235,440 247,510 260,590 272,630 285,645 300,647 318,638 330,630 343,614 360,604 410,558 460,522 500,502 545,482 600,465 660,445 700,440 730,446 752,468 770,510 790,560 805,596 822,614 840,616 860,612 900,592 950,570 1000,543 1045,505 1080,473 1120,448 1170,436 1230,431 1280,436 1330,454 1390,482 1440,500 1490,508", color: "#808080" },
      { pts: "90,788 120,773 145,755 165,730 185,692 200,645 212,580 222,500 232,380 240,220 246,130 251,108 256,130 261,220 266,350 273,460 280,560 290,640 305,715 322,755 340,788 360,807 385,822 410,831 450,833 500,829 550,821 600,807 640,793 670,770 700,738 720,700 740,650 755,600 765,565 777,548 788,565 798,610 810,660 830,725 855,775 880,805 905,822 950,841 1000,853 1045,857 1095,850 1150,828 1230,790 1300,748 1345,725 1385,718 1430,726 1490,740", color: "#606060", width: 3 },
      { pts: "90,775 280,773 420,768 560,757 640,741 700,712 750,673 790,630 812,609 835,603 855,609 880,632 910,665 945,692 1000,714 1060,743 1100,751 1160,751 1220,744 1290,728 1340,709 1370,695 1415,682 1450,665 1490,641", color: RED },
      { pts: "90,745 200,745 300,742 400,735 450,726 500,713 550,695 600,665 640,635 680,614 712,612 745,630 790,665 830,692 870,711 910,719 950,720 1000,714 1050,703 1120,678 1180,646 1240,606 1300,566 1370,495 1430,418 1490,330", color: GREEN },
      { pts: "90,806 115,798 145,780 175,752 195,720 210,680 222,615 235,490 243,380 250,240 257,140 262,90 264,78", color: BLUE },
      { pts: "268,78 273,150 280,290 287,420 297,540 312,640 325,695 340,738 355,757 370,780 400,801 440,814 480,819 560,821 640,818 700,814 750,810 810,808 870,800 905,790 930,793 980,788 1030,777 1085,757 1130,733 1160,720 1185,702 1200,693 1215,693 1250,665 1310,610 1360,550 1400,490 1440,420 1490,328", color: BLUE },
    ],
  },
];

function RoundButton({ label, minus = false }: { label: string; minus?: boolean }) {
  return (
    <button type="button" aria-label={label} className="flex h-[22px] w-[25px] items-center justify-center border border-[#adadad] bg-[#e1e1e1]">
      <svg viewBox="0 0 20 18" className="h-[18px] w-5">
        <rect width="20" height="18" rx="8" fill="#45b08c" />
        <path d={minus ? "M4 9H16" : "M4 9H16M10 3V15"} stroke="#fff" strokeWidth="2" />
      </svg>
    </button>
  );
}

function ArrowsButton({ label, d }: { label: string; d: string }) {
  return (
    <button type="button" aria-label={label} className="flex h-[21px] w-5 items-center justify-center border border-[#adadad] bg-[#e1e1e1]">
      <svg viewBox="0 0 14 16" className="h-4 w-[14px]"><path d={d} fill="#404040" /></svg>
    </button>
  );
}

function RightPane() {
  return (
    <section className="flex min-w-0 flex-1 flex-col pb-[19px] pr-[3px]">
      <div className="flex h-8 items-center pb-[2px] pl-1">
        <span className="w-[52px]">Ref angle</span>
        <TextBox label="Ref angle" value="0" className="w-[39px] text-center" />
        <span className="ml-[6px] w-[46px]">deg hor</span>
        <Check id="spl-max" checked />
        <label htmlFor="spl-max" className="ml-[6px] w-[50px]">SPL max</label>
        <TextBox label="SPL max" value="90" className="w-[39px] text-center" />
        <span className="ml-[5px] flex gap-[2px]">
          <ArrowsButton label="Range up or down" d="M1 7L7 0L13 7ZM1 9L7 16L13 9Z" />
          <ArrowsButton label="Compress range" d="M1 0H13V1L7 8L1 1ZM1 16H13V15L7 8L1 15Z" />
        </span>
        <span className="ml-[10px] w-[23px]">Ovl</span>
        <span className="flex gap-[6px]">
          <RoundButton label="Add overlay" />
          <RoundButton label="Remove overlay" minus />
        </span>
        <TextBox label="Overlay name" value="delay inc passive 1a" className="ml-[5px] w-[290px] pl-[2px]" />
        <span className="ml-auto flex items-center pr-[6px]">
          <TextBox label="Lowest frequency" value="20" className="w-[35px] text-center" />
          <span className="w-[19px] text-center">...</span>
          <TextBox label="Highest frequency" value="20000" className="w-10 text-center" />
          <span className="ml-[5px]">Hz</span>
        </span>
      </div>
      <div className="grid flex-1 auto-rows-fr grid-cols-2 gap-[6px]">
        {CHARTS.map((c) => <Chart key={c.title} {...c} />)}
      </div>
    </section>
  );
}

/* ---------- window ---------- */

function TitleBar() {
  return (
    <header className="flex h-[23px] items-center bg-white pl-[3px]">
      <svg viewBox="0 0 15 13" className="h-[13px] w-[15px]">
        <path d="M3 1H12L15 4L7.5 12.5L0 4Z" fill="#d01010" />
        <path d="M4 3H6L7.5 6L9 3H11L7.5 9Z" fill="#ffd400" />
        <path d="M2 4L7.5 11L13 4" fill="none" stroke="#8a0a0a" strokeWidth="0.6" />
      </svg>
      <h1 className="ml-[5px] whitespace-nowrap font-[Roboto,'Open_Sans',sans-serif] text-[12px] leading-none">
        VituixCAD: C:\Users\Adrian\Desktop\Adrian\Anechoic Measure\11 Delay comp\delay inc passive 1a.vxp
      </h1>
      <div className="ml-auto flex pr-[2px]">
        {[["Minimize", "M1 6H11"], ["Restore", "M2 4H9V11H2ZM4 4V2H11V9H9"], ["Close", "M1 1L11 11M11 1L1 11"]].map(([name, d]) => (
          <button key={name} type="button" aria-label={name} className="flex h-5 w-[46px] items-center justify-center">
            <svg viewBox="0 0 12 12" className="size-3"><path d={d} fill="none" stroke="#000" strokeWidth="1" /></svg>
          </button>
        ))}
      </div>
    </header>
  );
}

export default function App() {
  return (
    <main className="flex min-h-screen flex-col bg-[#f0f0f0] font-['Liberation_Sans',Arial,sans-serif] text-[11px] leading-[13px] text-black">
      <TitleBar />
      <div className="flex flex-1">
        <LeftPane />
        <RightPane />
      </div>
    </main>
  );
}
